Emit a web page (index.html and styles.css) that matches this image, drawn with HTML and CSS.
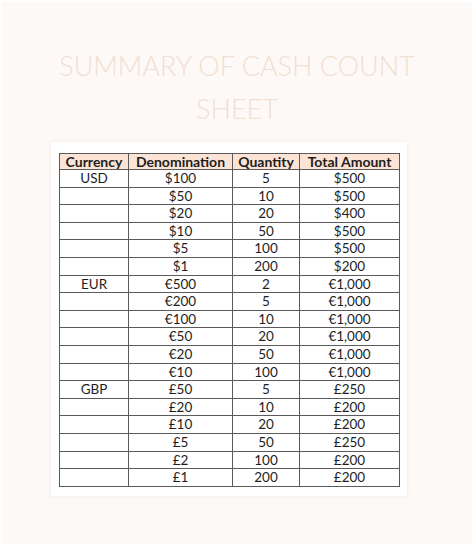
FILE: index.html
```html
<!DOCTYPE html>
<html>
<head>
<meta charset="utf-8">
<link rel="stylesheet" href="styles.css">
</head>
<body>
<div class="page">
  <h1 class="title">SUMMARY OF CASH COUNT<br>SHEET</h1>
  <div class="panel">
    <table class="sheet">
      <colgroup>
        <col class="c1"><col class="c2"><col class="c3"><col class="c4">
      </colgroup>
      <thead>
        <tr><th>Currency</th><th>Denomination</th><th>Quantity</th><th>Total Amount</th></tr>
      </thead>
      <tbody>
        <tr><td>USD</td><td>$100</td><td>5</td><td>$500</td></tr>
        <tr><td></td><td>$50</td><td>10</td><td>$500</td></tr>
        <tr><td></td><td>$20</td><td>20</td><td>$400</td></tr>
        <tr><td></td><td>$10</td><td>50</td><td>$500</td></tr>
        <tr><td></td><td>$5</td><td>100</td><td>$500</td></tr>
        <tr><td></td><td>$1</td><td>200</td><td>$200</td></tr>
        <tr><td>EUR</td><td>€500</td><td>2</td><td>€1,000</td></tr>
        <tr><td></td><td>€200</td><td>5</td><td>€1,000</td></tr>
        <tr><td></td><td>€100</td><td>10</td><td>€1,000</td></tr>
        <tr><td></td><td>€50</td><td>20</td><td>€1,000</td></tr>
        <tr><td></td><td>€20</td><td>50</td><td>€1,000</td></tr>
        <tr><td></td><td>€10</td><td>100</td><td>€1,000</td></tr>
        <tr><td>GBP</td><td>£50</td><td>5</td><td>£250</td></tr>
        <tr><td></td><td>£20</td><td>10</td><td>£200</td></tr>
        <tr><td></td><td>£10</td><td>20</td><td>£200</td></tr>
        <tr><td></td><td>£5</td><td>50</td><td>£250</td></tr>
        <tr><td></td><td>£2</td><td>100</td><td>£200</td></tr>
        <tr><td></td><td>£1</td><td>200</td><td>£200</td></tr>
      </tbody>
    </table>
  </div>
</div>
</body>
</html>
```
FILE: styles.css
```css
html, body {
  margin: 0;
  padding: 0;
  background: #ffffff;
}
body {
  padding: 2px 2px 5px 2px;
  width: 474px;
  height: 549px;
  box-sizing: border-box;
}
.page {
  background: #fdf9f6;
  height: 542px;
  padding-top: 42px;
  box-sizing: border-box;
  font-family: Lato, "Liberation Sans", sans-serif;
}
.title {
  margin: 0;
  text-align: center;
  font-weight: 300;
  font-size: 27px;
  line-height: 43px;
  color: #f1e0d2;
  letter-spacing: 0;
}
.panel {
  background: #ffffff;
  width: 356px;
  margin: 12px 0 0 49px;
  padding: 11px 8px 9px 8px;
  box-sizing: border-box;
  box-shadow: 0 0 3px rgba(220, 205, 190, 0.35);
}
.sheet {
  border-collapse: collapse;
  width: 340px;
  table-layout: fixed;
  font-size: 13.5px;
  color: #1e1e1e;
}
.c1 { width: 69px; }
.c2 { width: 104px; }
.c3 { width: 67px; }
.c4 { width: 100px; }
.sheet th,
.sheet td {
  border: 1px solid #5a5a5a;
  text-align: center;
  padding: 0;
  white-space: nowrap;
}
.sheet th {
  background: #fbe4d5;
  font-weight: 700;
  height: 15px;
  line-height: 15px;
  font-size: 14px;
}
.sheet td {
  height: 16.6px;
  line-height: 16.6px;
}
```
